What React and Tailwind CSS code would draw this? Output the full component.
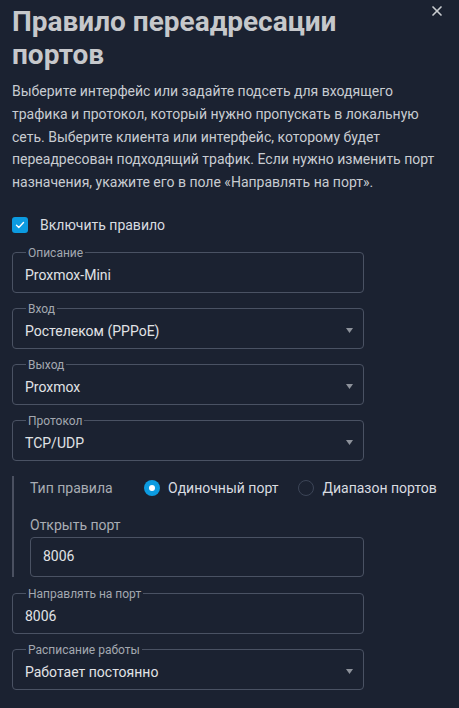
import { X } from 'lucide-react'

const FIELDS_TOP = [
  { label: 'Описание', value: 'Proxmox-Mini' },
  { label: 'Вход', value: 'Ростелеком (PPPoE)', select: true },
  { label: 'Выход', value: 'Proxmox', select: true },
  { label: 'Протокол', value: 'TCP/UDP', select: true },
]

function Field({ label, value, select, className = '' }) {
  return (
    <fieldset className={`w-[352px] rounded-[4px] border border-[#4a5263] px-3 pt-[5px] pb-[7px] ${className}`}>
      <legend className="ml-px px-0.5 text-[12px] leading-[14px] text-[#a3a8b0]">{label}</legend>
      <div className="flex items-center justify-between">
        <span className="text-[14px] leading-5 text-[#e1e3e6]">{value}</span>
        {select && (
          <svg width="7" height="5" viewBox="0 0 7 5" className="-mr-0.5">
            <path d="M0 0h7L3.5 5z" fill="#8d929b" />
          </svg>
        )}
      </div>
    </fieldset>
  )
}

function Radio({ checked, label }) {
  return (
    <label className="flex items-center gap-2">
      {checked ? (
        <span className="flex h-4 w-4 items-center justify-center rounded-full bg-[#0c9be0]">
          <span className="h-1.5 w-1.5 rounded-full bg-white" />
        </span>
      ) : (
        <span className="h-4 w-4 rounded-full border border-[#3c4557]" />
      )}
      <span className="text-[14px] leading-5 text-[#d9dce0]">{label}</span>
    </label>
  )
}

export default function App() {
  return (
    <div className="min-h-screen bg-[#1b2231] px-3 pt-[5px] font-['Roboto',sans-serif]">
      {/* Header */}
      <div className="flex items-start justify-between">
        <h2 className="w-[405px] text-[28px] font-bold leading-[33px] text-[#c6c8cb]">
          Правило переадресации портов
        </h2>
        <button className="-mt-0.5 mr-[2px] text-[#c9ccd0]">
          <X size={16} strokeWidth={2.5} />
        </button>
      </div>

      <p className="mt-[9px] text-[14px] leading-relaxed text-[#c8ccd1]">
        Выберите интерфейс или задайте подсеть для входящего трафика и протокол, который нужно пропускать в локальную сеть. Выберите клиента или интерфейс, которому будет переадресован подходящий трафик. Если нужно изменить порт назначения, укажите его в поле «Направлять на порт».
      </p>

      {/* Enable */}
      <label className="mt-[21px] flex items-center gap-3">
        <span className="flex h-4 w-4 items-center justify-center rounded-[3px] bg-[#0c9be0]">
          <svg width="10" height="8" viewBox="0 0 10 8">
            <path d="M1.5 4.2l2.3 2.2L8.5 1.6" stroke="white" strokeWidth="1.4" fill="none" strokeLinecap="round" strokeLinejoin="round" />
          </svg>
        </span>
        <span className="text-[14px] leading-5 text-[#d9dce0]">Включить правило</span>
      </label>

      <div className="mt-[11px] flex flex-col gap-[9px]">
        {FIELDS_TOP.map((f) => (
          <Field key={f.label} {...f} />
        ))}

        {/* Rule type */}
        <div className="mt-[6px] flex border-l-2 border-[#4a5060] pt-[2px] pl-4">
          <div className="flex flex-col">
            <div className="flex items-center">
              <span className="w-[114px] text-[14px] leading-5 text-[#a9adb4]">Тип правила</span>
              <div className="flex items-center gap-5">
                <Radio checked label="Одиночный порт" />
                <Radio label="Диапазон портов" />
              </div>
            </div>
            <span className="mt-[17px] text-[14px] leading-5 text-[#a9adb4]">Открыть порт</span>
            <div className="mt-[2px] flex h-10 w-[334px] items-center rounded-[4px] border border-[#4a5263] px-3">
              <span className="text-[14px] text-[#e1e3e6]">8006</span>
            </div>
          </div>
        </div>

        <Field label="Направлять на порт" value="8006" className="mt-px" />
        <Field label="Расписание работы" value="Работает постоянно" select />
      </div>
    </div>
  )
}
